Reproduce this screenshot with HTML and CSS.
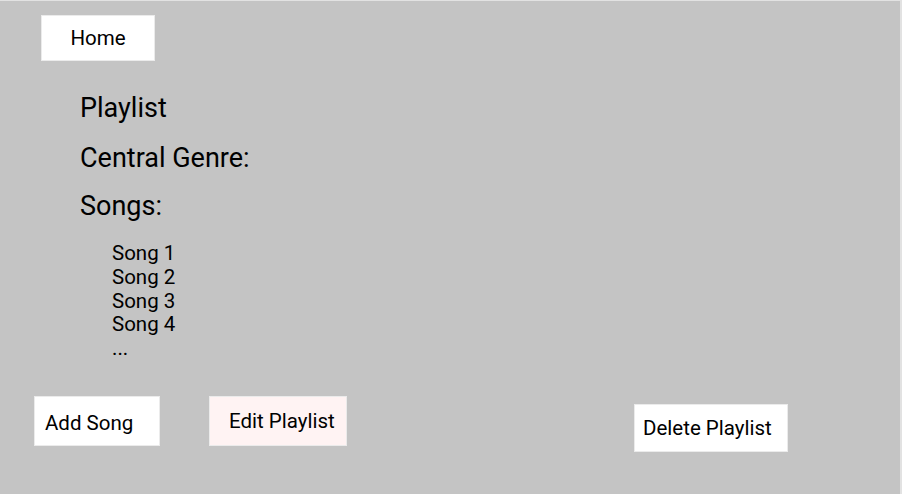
FILE: index.html
```html
<!DOCTYPE html>
<html>
<head>
<meta charset="utf-8">
<link rel="stylesheet" href="styles.css">
</head>
<body>
<div class="frame">
  <div class="top">
    <button class="btn home">Home</button>
  </div>
  <div class="content">
    <h1 class="title">Playlist</h1>
    <h2 class="title genre">Central Genre:</h2>
    <h2 class="title songs-title">Songs:</h2>
    <ul class="songs">
      <li>Song 1</li>
      <li>Song 2</li>
      <li>Song 3</li>
      <li>Song 4</li>
      <li>...</li>
    </ul>
  </div>
  <div class="actions">
    <button class="btn add">Add Song</button>
    <button class="btn edit">Edit Playlist</button>
    <button class="btn delete">Delete Playlist</button>
  </div>
</div>
</body>
</html>
```

FILE: styles.css
```css
html, body {
  margin: 0;
  padding: 0;
  background: #e2e2e2;
}
body {
  width: 902px;
  height: 494px;
  overflow: hidden;
  font-family: Roboto, "Liberation Sans", sans-serif;
  color: #000;
}
.frame {
  box-sizing: border-box;
  margin-top: 1px;
  width: 900px;
  height: 493px;
  background: #c4c4c4;
  display: flex;
  flex-direction: column;
}
.btn {
  font-family: Roboto, "Liberation Sans", sans-serif;
  font-size: 20.5px;
  color: #000;
  background: #fff;
  border: 1px solid #ebebeb;
  box-sizing: border-box;
  padding: 0;
  margin: 0;
}
.top {
  display: flex;
  padding: 14px 0 0 41px;
}
.home {
  width: 114px;
  height: 46px;
}
.content {
  padding: 31.5px 0 0 80px;
}
.title {
  margin: 0;
  font-weight: 400;
  font-size: 27px;
  line-height: 30px;
}
.genre {
  margin-top: 20px;
}
.songs-title {
  margin-top: 18.3px;
}
.songs {
  list-style: none;
  margin: 21.7px 0 0 0;
  padding: 0 0 0 32px;
  font-size: 20.5px;
  line-height: 23.6px;
}
.songs .more {
  font-size: 16px;
}
.actions {
  display: flex;
  align-items: flex-start;
  padding: 35.8px 0 0 34px;
}
.add {
  width: 126px;
  height: 50px;
  text-align: left;
  padding: 4px 0 0 10px;
}
.edit {
  margin-left: 49px;
  width: 138px;
  height: 50px;
  background: #fff3f3;
  text-align: left;
  padding-left: 19px;
}
.delete {
  margin-left: 287px;
  margin-top: 8px;
  width: 154px;
  height: 48px;
  text-align: left;
  padding-left: 8px;
}
```
